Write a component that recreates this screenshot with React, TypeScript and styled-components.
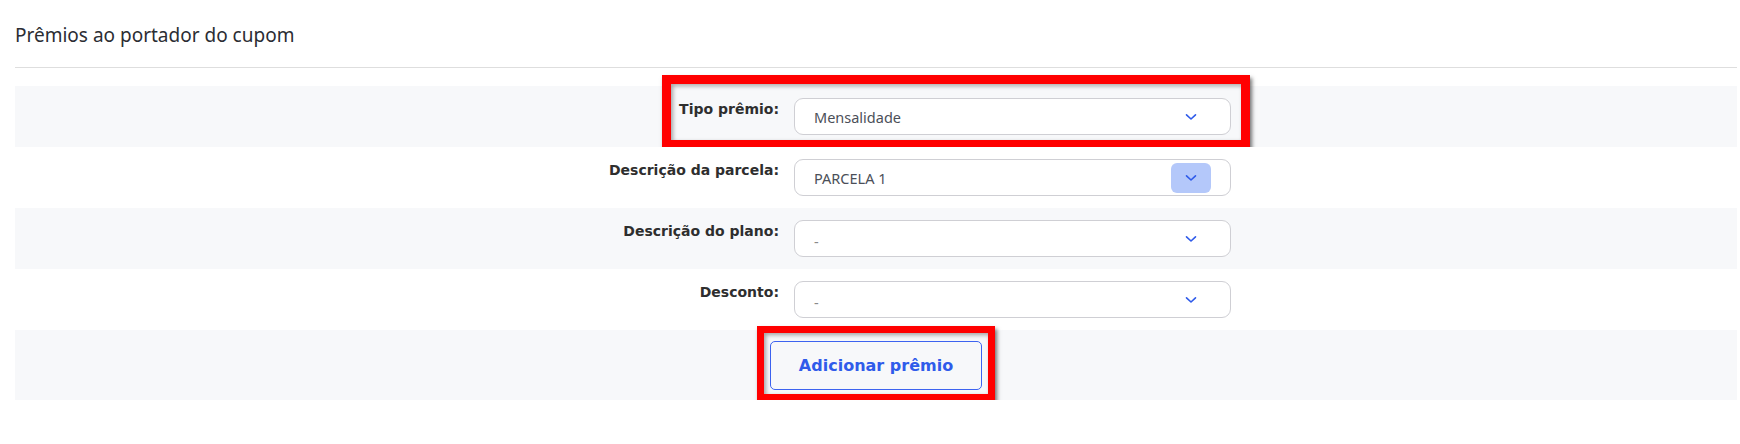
import styled, { createGlobalStyle } from 'styled-components';

const GlobalStyle = createGlobalStyle`
  body {
    margin: 0;
    background: #ffffff;
    font-family: "Noto Sans", sans-serif;
  }
`;

type Field = { label: string; value: string; highlight?: boolean; active?: boolean };

const fields: Field[] = [
  { label: 'Tipo prêmio:', value: 'Mensalidade', highlight: true },
  { label: 'Descrição da parcela:', value: 'PARCELA 1', active: true },
  { label: 'Descrição do plano:', value: '-' },
  { label: 'Desconto:', value: '-' },
];

function Chevron() {
  return (
    <svg width="12" height="8" viewBox="0 0 12 8" fill="none">
      <path d="M1.5 1.8 L6 6 L10.5 1.8" stroke="#2f5bea" strokeWidth="1.6" strokeLinecap="round" strokeLinejoin="round" />
    </svg>
  );
}

function App() {
  return (
    <Page>
      <GlobalStyle />
      <Title>Prêmios ao portador do cupom</Title>
      <Divider />
      <Form>
        {fields.map((f, i) => (
          <Row key={f.label} $striped={i % 2 === 0}>
            <Label>{f.label}</Label>
            <Select>
              <SelectValue $placeholder={f.value === '-'}>{f.value}</SelectValue>
              <Arrow $active={f.active}>
                <Chevron />
              </Arrow>
            </Select>
            {f.highlight && <RowHighlight />}
          </Row>
        ))}
        <ButtonRow $striped>
          <ButtonMark>
            <AddButton>Adicionar prêmio</AddButton>
          </ButtonMark>
        </ButtonRow>
      </Form>
    </Page>
  );
}

export default App;

const Page = styled.div`
  padding: 22px 3px 0 15px;
`;

const Title = styled.h5`
  margin: 0;
  font-family: "Noto Sans", sans-serif;
  font-size: 19px;
  font-weight: 400;
  line-height: 26px;
  color: #2b2d33;
`;

const Divider = styled.hr`
  margin: 19px 0 0;
  border: none;
  border-top: 1px solid #dedede;
`;

const Form = styled.div`
  margin-top: 18px;
`;

const Row = styled.div<{ $striped?: boolean }>`
  position: relative;
  display: grid;
  grid-template-columns: 764px 437px;
  column-gap: 15px;
  align-items: start;
  padding: 12px 0;
  background: ${p => (p.$striped ? '#f7f8fa' : '#ffffff')};
`;

const Label = styled.label`
  padding-top: 1px;
  text-align: right;
  font-family: "DejaVu Sans", sans-serif;
  font-size: 14px;
  font-weight: 700;
  line-height: 20px;
  color: #2e2e2e;
`;

const Select = styled.div`
  box-sizing: border-box;
  height: 37px;
  display: flex;
  align-items: center;
  justify-content: space-between;
  padding: 0 20px 0 19px;
  background: #ffffff;
  border: 1px solid #cfcfd4;
  border-radius: 9px;
`;

const SelectValue = styled.span<{ $placeholder?: boolean }>`
  font-family: "Noto Sans", sans-serif;
  font-size: 14.5px;
  color: ${p => (p.$placeholder ? '#8a8a8a' : '#4b4f58')};
  padding-top: ${p => (p.$placeholder ? '4px' : '0')};
`;

const Arrow = styled.span<{ $active?: boolean }>`
  width: 40px;
  height: 30px;
  margin-right: -1px;
  display: flex;
  align-items: center;
  justify-content: center;
  border-radius: 6px;
  background: ${p => (p.$active ? '#b4c8fa' : 'transparent')};
`;

const RowHighlight = styled.div`
  position: absolute;
  left: 647px;
  top: -11px;
  width: 588px;
  height: 74px;
  box-sizing: border-box;
  border: 9px solid #ff0000;
  box-shadow: 2px 3px 4px rgba(0, 0, 0, 0.55), inset 2px 2px 4px rgba(0, 0, 0, 0.35);
  pointer-events: none;
`;

const ButtonRow = styled.div<{ $striped?: boolean }>`
  display: flex;
  justify-content: center;
  padding: 11px 0 10px;
  background: ${p => (p.$striped ? '#f7f8fa' : '#ffffff')};
`;

const ButtonMark = styled.span`
  position: relative;
  display: inline-block;

  &::after {
    content: '';
    position: absolute;
    inset: -15px -13px -11px -13px;
    border: 7px solid #ff0000;
    box-shadow: 2px 3px 4px rgba(0, 0, 0, 0.55), inset 2px 2px 4px rgba(0, 0, 0, 0.35);
    pointer-events: none;
  }
`;

const AddButton = styled.button`
  display: block;
  width: 212px;
  height: 49px;
  padding: 0;
  background: transparent;
  border: 1px solid #3d63f0;
  border-radius: 5px;
  font-family: "DejaVu Sans", sans-serif;
  font-size: 16px;
  font-weight: 700;
  color: #2f5bea;
  cursor: pointer;
`;
